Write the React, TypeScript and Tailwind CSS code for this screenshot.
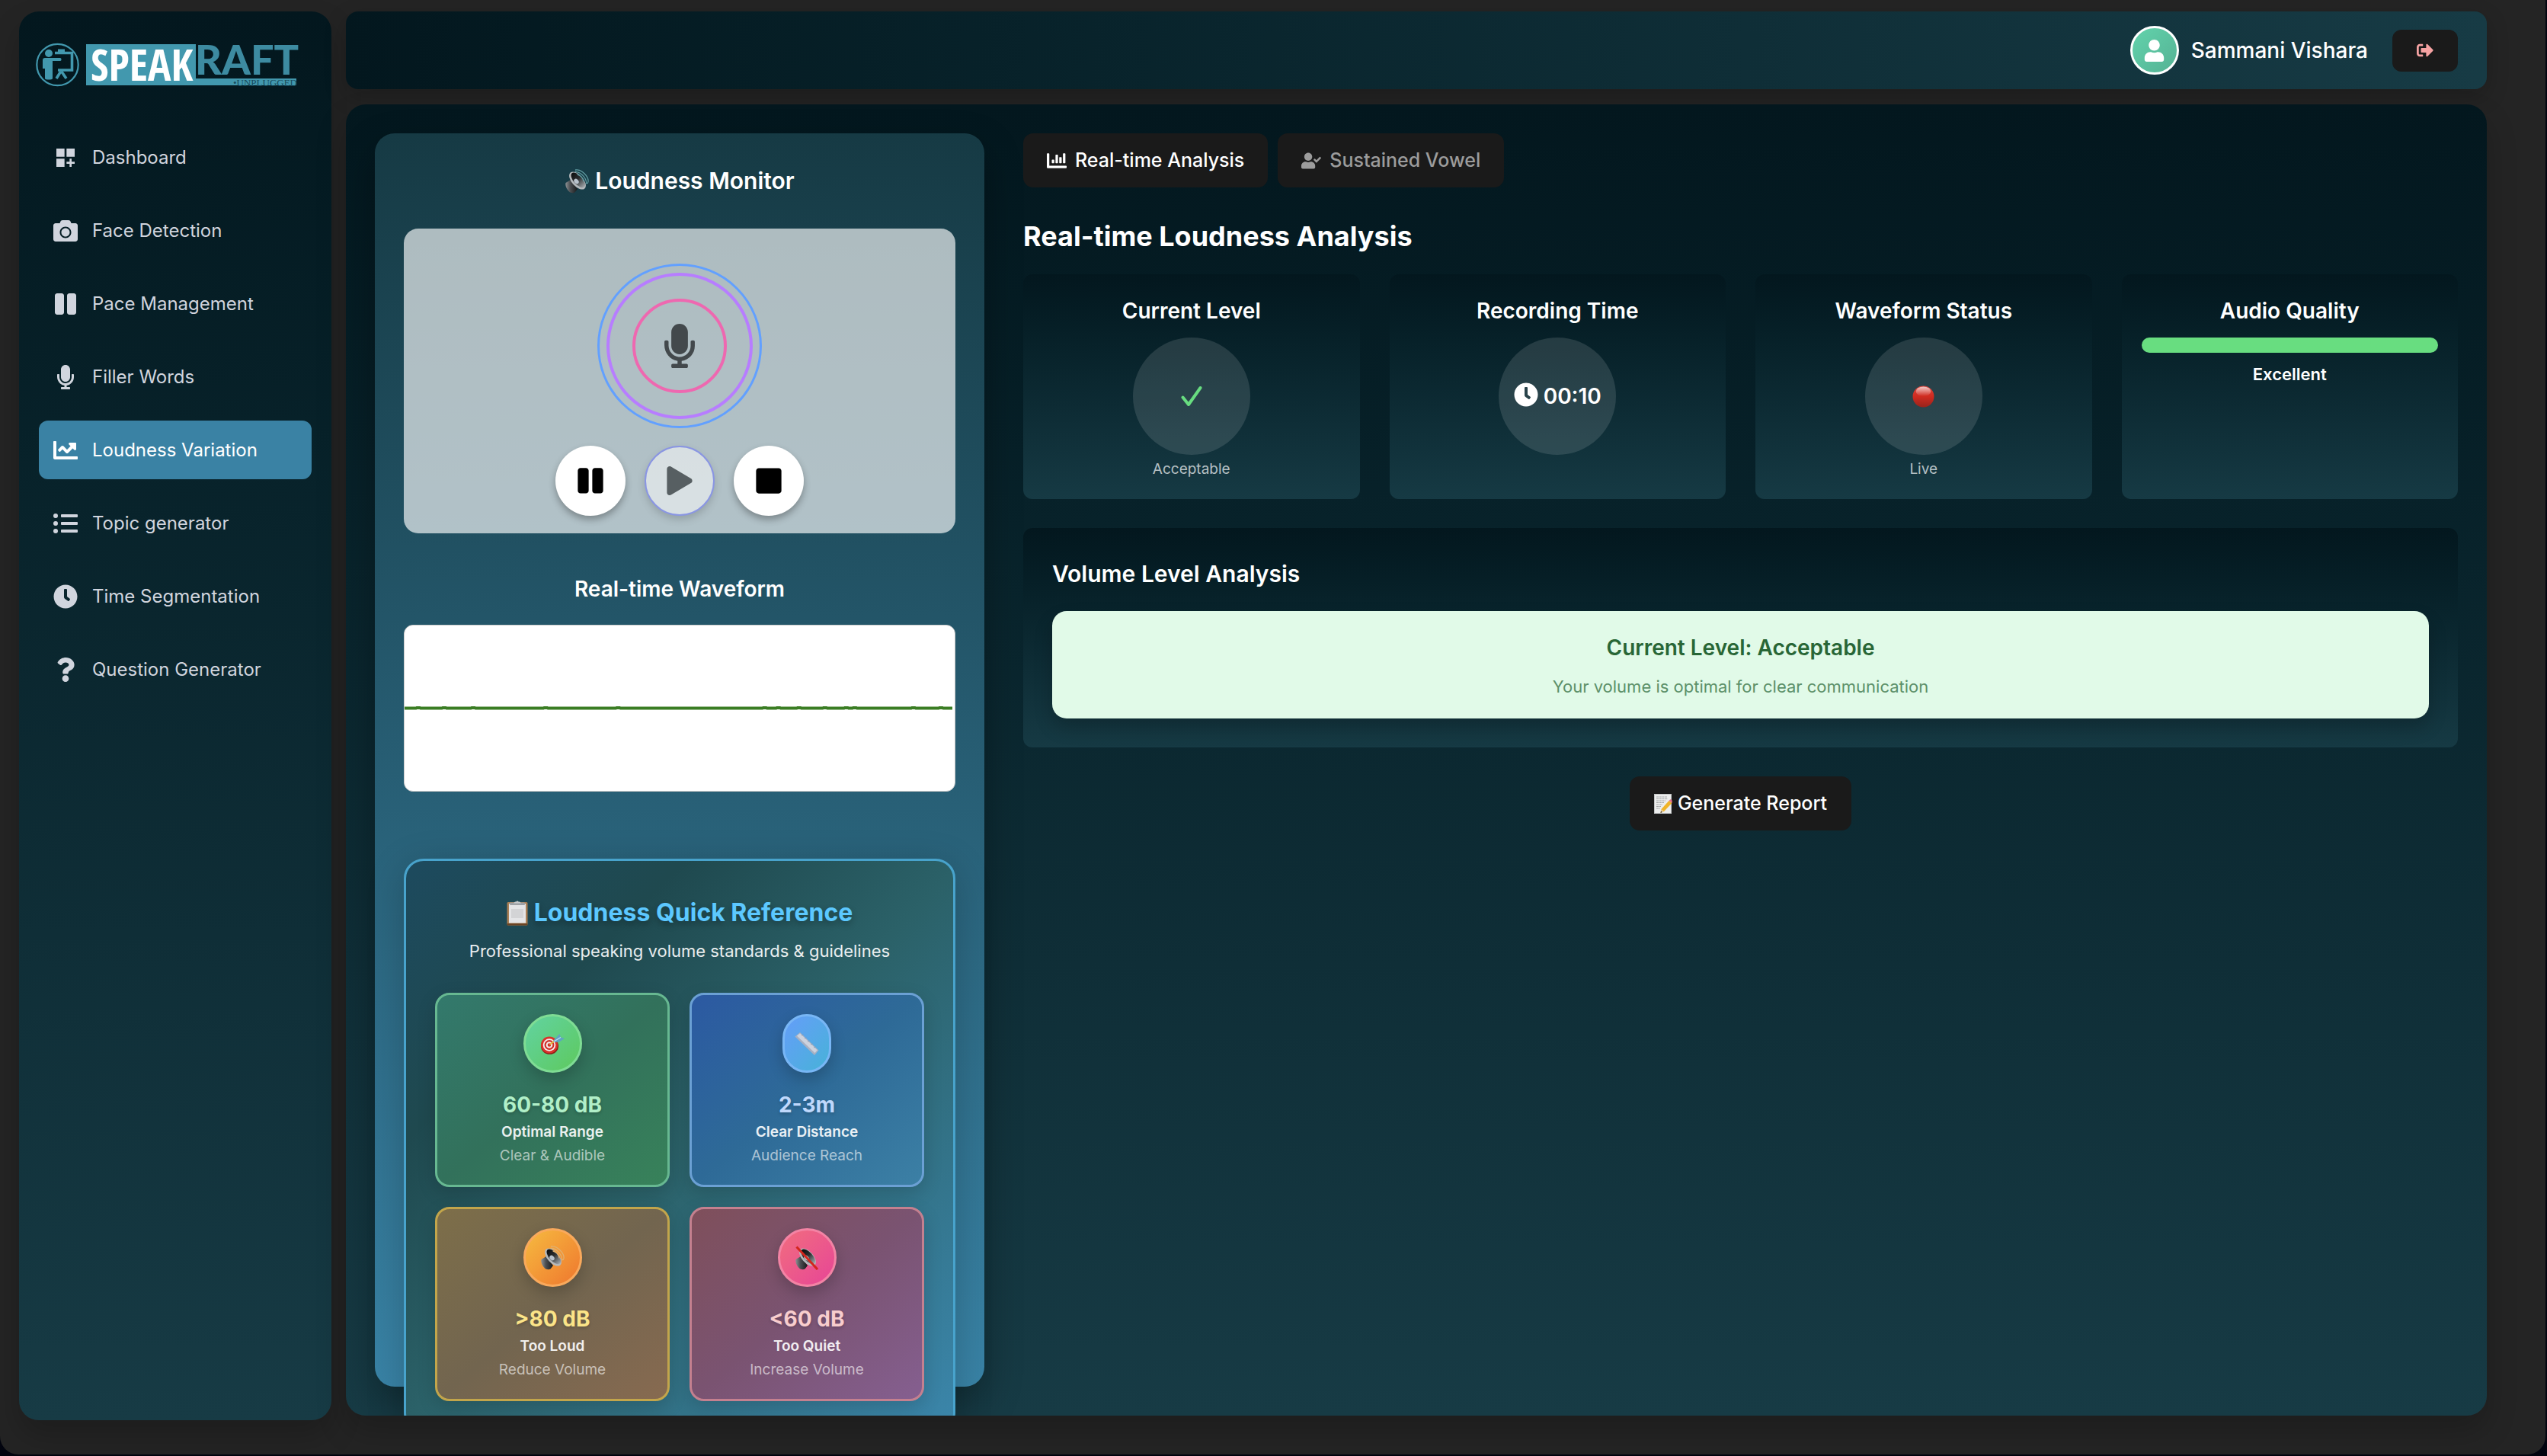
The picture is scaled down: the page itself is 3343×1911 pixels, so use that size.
import React from 'react';
import { MdDashboardCustomize } from 'react-icons/md';
import {
  FaCamera,
  FaChartBar,
  FaChartLine,
  FaClock,
  FaListUl,
  FaMicrophone,
  FaPause,
  FaPlay,
  FaQuestion,
  FaSignOutAlt,
  FaStop,
  FaUser,
  FaUserCheck,
} from 'react-icons/fa';

function SpeakerArt({ className, muted = false, wave = '#5f9aa0' }: { className: string; muted?: boolean; wave?: string }) {
  const id = React.useId();
  return (
    <svg viewBox="0 0 32 32" className={className} aria-hidden="true">
      <defs>
        <linearGradient id={`${id}-box`} x1="0" y1="0" x2="1" y2="0">
          <stop offset="0" stopColor="#8d9194" />
          <stop offset="0.400" stopColor="#4a4d50" />
          <stop offset="1" stopColor="#17191a" />
        </linearGradient>
        <linearGradient id={`${id}-cone`} x1="0" y1="0" x2="0" y2="1">
          <stop offset="0" stopColor="#0c0d0e" />
          <stop offset="0.450" stopColor="#2a2d2f" />
          <stop offset="1" stopColor="#a4a9ad" />
        </linearGradient>
      </defs>
      <path d="M1.500 18 8 14l9 12-3.500 4.500c-2 1.200-6 .8-7.500-1C3 26.500.5 21.500 1.500 18Z" fill={`url(#${id}-box)`} />
      <ellipse cx="17" cy="15" rx="7.500" ry="14" transform="rotate(-42 17 15)" fill="#b4b8bb" />
      <ellipse cx="17.800" cy="14.300" rx="5.800" ry="12.200" transform="rotate(-42 17.800 14.300)" fill={`url(#${id}-cone)`} />
      <ellipse cx="15.500" cy="16" rx="2.800" ry="3.600" transform="rotate(-42 15.500 16)" fill="#b9c2cc" />
      {muted ? (
        <path d="M3.500 2.500 29 30" stroke="#d3261d" strokeWidth="3" strokeLinecap="square" />
      ) : (
        <g fill="none" stroke={wave} strokeWidth="1.300" strokeLinecap="round">
          <path d="M14 3.500C21 3 29 12 28.500 18.500" />
          <path d="M14.500 1C22-.5 32 10 31 16.500c-.3 1.800-1.300 2.500-2.500 2" />
          <path d="M17 7c4 1 7.500 5 8 9" />
        </g>
      )}
    </svg>
  );
}

function ClipboardArt({ className }: { className: string }) {
  return (
    <svg viewBox="0 0 28 34" className={className} aria-hidden="true">
      <rect x="0.500" y="3" width="27" height="30.500" rx="1.500" fill="#a97f55" />
      <rect x="0.500" y="31" width="27" height="2.500" rx="1" fill="#6b4424" />
      <rect x="3" y="5" width="22" height="25.500" fill="#e4e5e7" />
      <rect x="6" y="12" width="16" height="12" fill="#d3d4d6" />
      <rect x="4" y="3.500" width="20" height="3.500" rx="1.200" fill="#9ea2a6" />
      <path d="M9 4.500 11 2.500h1.500a1.600 1.600 0 0 1 3 0H17l2 2Z" fill="#c8cbce" />
    </svg>
  );
}

function TargetArt({ className }: { className: string }) {
  return (
    <svg viewBox="0 0 32 28" className={className} aria-hidden="true">
      <ellipse cx="12.500" cy="17" rx="11.500" ry="10.800" fill="#8f1a17" />
      <circle cx="12" cy="15.500" r="11" fill="#d9322b" />
      <circle cx="12" cy="15.500" r="8.300" fill="#f7eeee" />
      <circle cx="12" cy="15.500" r="6.500" fill="#cf2f29" />
      <circle cx="12" cy="15.500" r="4.300" fill="#f7eeee" />
      <circle cx="12" cy="15.500" r="2.300" fill="#cf2f29" />
      <path d="m12.500 15 8-6" stroke="#e3bd3f" strokeWidth="1.800" />
      <path d="m17.500 9.500 8-8.500 1.500 4.500L32 7l-7 4.500-7 .5Z" fill="#5fa3c4" />
      <path d="m18 11 9-5.500" stroke="#bfe3f2" strokeWidth="1.200" />
    </svg>
  );
}

function RulerArt({ className }: { className: string }) {
  return (
    <svg viewBox="0 0 32 32" className={className} aria-hidden="true">
      <path d="M0.500 6.500 7 1l24.500 23.500L26 31Z" fill="#a7b0c2" />
      <path d="M3 5.500 7 2.300l22.700 22L26.500 28Z" fill="#ccd2de" />
      <path d="m9 5 2.500-1M13 9l2.500-1M17 13l2.500-1M21 17l2.500-1M25 21l2.500-1" stroke="#8d96a8" strokeWidth="0.800" />
    </svg>
  );
}

function RedDotArt({ className }: { className: string }) {
  return (
    <svg viewBox="0 0 28 28" className={className} aria-hidden="true">
      <defs>
        <linearGradient id="dot-body" x1="0" y1="0" x2="0" y2="1">
          <stop offset="0" stopColor="#d9453c" />
          <stop offset="0.500" stopColor="#cf2b20" />
          <stop offset="1" stopColor="#97231c" />
        </linearGradient>
        <linearGradient id="dot-shine" x1="0" y1="0" x2="0" y2="1">
          <stop offset="0" stopColor="#fff" stopOpacity="0.700" />
          <stop offset="1" stopColor="#fff" stopOpacity="0" />
        </linearGradient>
      </defs>
      <circle cx="14" cy="14" r="13.500" fill="url(#dot-body)" />
      <ellipse cx="14" cy="7.500" rx="9.500" ry="6" fill="url(#dot-shine)" />
    </svg>
  );
}

function MemoArt({ className }: { className: string }) {
  return (
    <svg viewBox="0 0 24 26" className={className} aria-hidden="true">
      <rect x="0.500" y="0.500" width="22" height="25" fill="#eceded" stroke="#c2c4c5" />
      <path
        d="M3 4h14M3 6.500h15M3 9h12M3 11.500h10M3 14h8M3 16.500h6M3 19h5"
        stroke="#9b9d9f"
        strokeWidth="0.900"
        strokeDasharray="3 0.700"
      />
      <path d="M19.500 9 23.500 12 13 23l-4.500 2 1-5Z" fill="#f0b429" />
      <path d="m19.500 9 1.500-1.500c1-.8 3.200 1 2.800 2.300L23.500 12Z" fill="#e8748a" />
      <path d="m9.500 20 3.500 3-4.500 2Z" fill="#e9cfa0" />
      <path d="m8.500 25 .6-2.400 1.600 1.400Z" fill="#333" />
    </svg>
  );
}

function Logo() {
  return (
    <svg viewBox="0 0 344 60" className="h-[60px] w-[344px] overflow-visible" role="img" aria-label="Speakraft Unplugged">
      <g fill="none" stroke="#4298ae">
        <circle cx="28.500" cy="30" r="27.200" strokeWidth="2.200" />
        <path d="M25 14.500h22.500v22.500H29" strokeWidth="3.600" />
        <path d="M33 38.500 27 48M33.500 38.500 40 48" strokeWidth="3.600" />
        <path d="M29 11.500h9" strokeWidth="4" />
      </g>
      <g fill="#4298ae">
        <circle cx="17" cy="15" r="5" />
        <path d="M12 21h20c2 0 2 4 0 4H22v23c0 2-10 2-10 0V35H9V24c0-2 1-3 3-3Z" />
        <rect x="66" y="3" width="144" height="54" />
        <rect x="209" y="48" width="133" height="9" />
      </g>
      <text x="72" y="51" fill="#ffffff" fontSize="57" fontWeight="700" fontFamily='"Open Sans Condensed", "Open Sans", sans-serif'>
        SPEAK
      </text>
      <text x="209" y="43" fill="#3d8ba1" fontSize="54" fontWeight="900" fontFamily="Lato, sans-serif">
        RAFT
      </text>
      <text x="259" y="58" fill="#164a5b" fontSize="13" fontFamily='"Liberation Serif", serif'>
        •UNPLUGGED
      </text>
    </svg>
  );
}

const NAV = [
  { label: 'Dashboard', Icon: MdDashboardCustomize },
  { label: 'Face Detection', Icon: FaCamera },
  { label: 'Pace Management', Icon: FaPause },
  { label: 'Filler Words', Icon: FaMicrophone },
  { label: 'Loudness Variation', Icon: FaChartLine, active: true },
  { label: 'Topic generator', Icon: FaListUl },
  { label: 'Time Segmentation', Icon: FaClock },
  { label: 'Question Generator', Icon: FaQuestion },
];

function Sidebar() {
  return (
    <aside className="mb-[45px] w-[410px] shrink-0 rounded-[26px] bg-linear-to-b from-[#03171e] to-[#173b45] px-[26px] pt-10 shadow-[0_20px_40px_rgba(0,0,0,0.2)]">
      <div className="-mx-1 mb-[53px]">
        <Logo />
      </div>
      <nav className="flex flex-col gap-[19px]">
        {NAV.map(({ label, Icon, active }) => (
          <a
            key={label}
            href="#"
            aria-current={active ? 'page' : undefined}
            className={
              active
                ? 'flex h-[77px] items-center gap-[19px] rounded-xl bg-[#3a82a4] px-[19px] text-[24px] text-white'
                : 'flex h-[77px] items-center gap-[19px] rounded-xl px-[19px] text-[24px] text-[#d1d5de]'
            }
          >
            <Icon className="size-8 shrink-0" />
            {label}
          </a>
        ))}
      </nav>
    </aside>
  );
}

function Header() {
  return (
    <header className="flex h-[102px] shrink-0 items-center justify-end rounded-[16px] bg-linear-to-r from-[#03171e] to-[#173b45] pr-[38px] shadow-[0_10px_30px_rgba(0,0,0,0.2)]">
      <div className="mr-4 flex size-16 items-center justify-center rounded-full border-[3px] border-white bg-linear-to-br from-[#62d3ac] to-[#55b294] text-white">
        <FaUser className="size-[29px]" />
      </div>
      <span className="mr-8 text-[28px] font-medium text-white">Sammani Vishara</span>
      <button
        type="button"
        aria-label="Sign out"
        className="flex h-[55px] w-[86px] items-center justify-center rounded-xl bg-[#1a1a1a] text-[#f6a3a3]"
      >
        <FaSignOutAlt className="size-[22px]" />
      </button>
    </header>
  );
}

const WAVE_BUMPS = [18, 52, 90, 185, 280, 472, 490, 517, 551, 579, 590, 667, 703];

function Waveform() {
  return (
    <div className="flex h-[219px] items-center overflow-hidden rounded-xl border border-[#cccccc] bg-white">
      <svg viewBox="0 0 721 10" preserveAspectRatio="none" className="h-[10px] w-full" role="img" aria-label="Waveform">
        <path
          d={'M0 4.500' + WAVE_BUMPS.map((x) => `H${x - 3}l1 -0.500h4l1 0.500`).join('') + 'H718'}
          fill="none"
          stroke="#3a7d23"
          strokeWidth="4"
        />
      </svg>
    </div>
  );
}

const TILES = [
  {
    value: '60-80 dB',
    label: 'Optimal Range',
    note: 'Clear & Audible',
    art: <TargetArt className="h-7 w-8" />,
    box: 'border-[#67b891] from-[#33796c] via-[#32715b] to-[#38825a]',
    badge: 'w-[77px] border-[#7fdc94] from-[#62d3a0] to-[#5ec95c]',
    color: 'text-[#b0efc8]',
  },
  {
    value: '2-3m',
    label: 'Clear Distance',
    note: 'Audience Reach',
    art: <RulerArt className="size-8" />,
    box: 'border-[#6ba0d4] from-[#2c59a2] via-[#2e6a97] to-[#3c80a5]',
    badge: 'w-16 border-[#78b6f5] from-[#649df9] to-[#46b2d8]',
    color: 'text-[#bfd8fc]',
  },
  {
    value: '>80 dB',
    label: 'Too Loud',
    note: 'Reduce Volume',
    art: <SpeakerArt className="size-8" wave="#e0b070" />,
    box: 'border-[#c2a54b] from-[#7d6e49] via-[#72654f] to-[#876a50]',
    badge: 'w-[77px] border-[#f9a95c] from-[#f5ba40] to-[#ee762e]',
    color: 'text-[#fbe488]',
  },
  {
    value: '<60 dB',
    label: 'Too Quiet',
    note: 'Increase Volume',
    art: <SpeakerArt className="size-8" muted />,
    box: 'border-[#c4808f] from-[#7f4f5b] via-[#7a5371] to-[#855f90]',
    badge: 'w-[77px] border-[#f383a4] from-[#f16c7e] to-[#e74496]',
    color: 'text-[#f8cdcd]',
  },
];

function QuickReference() {
  return (
    <section className="mt-[88px] rounded-[26px] border-[3px] border-[#48a3cc] bg-[linear-gradient(135deg,#1d4a5e_0%,#1f494f_25%,#2b6168_50%,#3b86ab_100%)] p-[38px] text-center shadow-[0_10px_50px_rgba(0,0,0,0.2)]">
      <h3 className="flex items-center justify-center gap-2 text-[32px] leading-[60px] font-bold text-[#5cc8ff] [text-shadow:0_4px_8px_rgba(0,0,0,0.3)]">
        <ClipboardArt className="h-[34px] w-7" />
        Loudness Quick Reference
      </h3>
      <p className="mt-1 text-[22px] leading-8 text-white/90">Professional speaking volume standards &amp; guidelines</p>
      <div className="mt-[39px] grid grid-cols-2 gap-[26px]">
        {TILES.map((t) => (
          <div
            key={t.value}
            className={`flex flex-col items-center rounded-[19px] border-[3px] bg-linear-to-br py-[25px] shadow-[0_8px_24px_rgba(0,0,0,0.15)] ${t.box}`}
          >
            <div
              className={`flex h-[77px] items-center justify-center rounded-full border-[3px] bg-linear-to-br shadow-[0_8px_20px_rgba(0,0,0,0.2)] ${t.badge}`}
            >
              {t.art}
            </div>
            <div className={`mt-[22px] text-[28px] leading-10 font-bold [text-shadow:0_2px_4px_rgba(0,0,0,0.2)] ${t.color}`}>{t.value}</div>
            <div className="mt-[3px] text-[19px] leading-[26px] font-semibold text-white/90">{t.label}</div>
            <div className="mt-[5px] text-[19px] leading-[26px] text-white/60">{t.note}</div>
          </div>
        ))}
      </div>
    </section>
  );
}

function Monitor() {
  return (
    <section className="min-h-0 rounded-[26px] bg-linear-to-b from-[#163a44] to-[#3983a6] p-[38px] shadow-[0_20px_50px_rgba(0,0,0,0.3)]">
      <h2 className="mb-[38px] flex items-center justify-center gap-2 text-[30px] leading-[49px] font-semibold text-white">
        <SpeakerArt className="size-8" />
        Loudness Monitor
      </h2>
      <div className="flex flex-col items-center rounded-[19px] bg-white/65 pt-[46px] pb-[23px]">
        <div className="grid size-[216px] place-items-center rounded-full border-[3px] border-[#62a0ff]">
          <div className="grid size-[192px] place-items-center rounded-full border-4 border-[#b77dff]">
            <div className="grid size-[124px] place-items-center rounded-full border-4 border-[#ee68b0]">
              <FaMicrophone className="size-[58px] text-[#43494c]" />
            </div>
          </div>
        </div>
        <div className="mt-[23px] flex gap-[25px]">
          <button
            type="button"
            aria-label="Pause"
            className="grid size-[92px] place-items-center rounded-full bg-white text-black shadow-[0_5px_10px_rgba(0,0,0,0.3)]"
          >
            <FaPause className="size-[38px]" />
          </button>
          <button
            type="button"
            aria-label="Play"
            className="grid size-[92px] place-items-center rounded-full border-2 border-[#646cff] bg-white text-black opacity-50 shadow-[0_5px_10px_rgba(0,0,0,0.3)]"
          >
            <FaPlay className="size-[38px]" />
          </button>
          <button
            type="button"
            aria-label="Stop"
            className="grid size-[92px] place-items-center rounded-full bg-white text-black shadow-[0_5px_10px_rgba(0,0,0,0.3)]"
          >
            <FaStop className="size-[38px]" />
          </button>
        </div>
      </div>
      <h3 className="mt-[51px] mb-[25px] text-center text-[28px] leading-[44px] font-semibold text-white">Real-time Waveform</h3>
      <Waveform />
      <QuickReference />
    </section>
  );
}

function StatCard({ title, children }: { title: string; children: React.ReactNode }) {
  return (
    <div className="flex min-h-[295px] flex-col items-center rounded-xl bg-linear-to-b from-[#03171e] to-[#163a44] p-[26px]">
      <h3 className="mb-[13px] text-[28px] leading-[44px] font-semibold text-white">{title}</h3>
      {children}
    </div>
  );
}

function Analysis() {
  return (
    <section className="flex flex-col">
      <div className="flex gap-[13px]">
        <button type="button" className="flex h-[71px] items-center gap-[11px] rounded-[13px] bg-[#1a1a1a] px-[31px] text-[25px] font-medium text-white">
          <FaChartBar className="size-[26px]" />
          Real-time Analysis
        </button>
        <button type="button" className="flex h-[71px] items-center gap-[11px] rounded-[13px] bg-[#1a1a1a] px-[31px] text-[25px] font-medium text-[#9c9c9c]">
          <FaUserCheck className="size-[26px]" />
          Sustained Vowel
        </button>
      </div>
      <h1 className="mt-[41px] text-[36px] leading-[46px] font-bold text-white">Real-time Loudness Analysis</h1>
      <div className="mt-[27px] grid grid-cols-4 gap-[39px]">
        <StatCard title="Current Level">
          <div className="grid size-[154px] place-items-center rounded-full bg-white/12">
            <svg viewBox="0 0 28 28" className="size-7" aria-hidden="true">
              <path d="M2.500 15.500 10 25 25.500 3" fill="none" stroke="#68dd80" strokeWidth="4" strokeLinecap="round" strokeLinejoin="round" />
            </svg>
          </div>
          <p className="mt-1.5 text-[19px] leading-[26px] text-white/70">Acceptable</p>
        </StatCard>
        <StatCard title="Recording Time">
          <div className="flex size-[154px] items-center justify-center gap-[7px] rounded-full bg-white/12 text-[28px] font-semibold text-white">
            <FaClock className="mb-1 size-8" />
            00:10
          </div>
        </StatCard>
        <StatCard title="Waveform Status">
          <div className="grid size-[154px] place-items-center rounded-full bg-white/12">
            <RedDotArt className="size-[29px]" />
          </div>
          <p className="mt-1.5 text-[19px] leading-[26px] text-white/70">Live</p>
        </StatCard>
        <StatCard title="Audio Quality">
          <div className="h-5 w-full rounded-[10px] bg-[#68dd80]" />
          <p className="mt-3 text-[22px] leading-8 font-semibold text-white">Excellent</p>
        </StatCard>
      </div>
      <div className="mt-[38px] rounded-xl bg-linear-to-b from-[#03171e] to-[#163a44] p-[38px]">
        <h2 className="mb-[26px] text-[30px] leading-[45px] font-semibold text-white">Volume Level Analysis</h2>
        <div className="rounded-[19px] bg-[#e1fae8] p-[26px] text-center shadow-[0_12px_24px_rgba(0,0,0,0.2)]">
          <p className="text-[28px] leading-[44px] font-semibold text-[#286636]">Current Level: Acceptable</p>
          <p className="mt-[13px] text-[22px] leading-8 text-[#5c9069]">Your volume is optimal for clear communication</p>
        </div>
      </div>
      <button
        type="button"
        className="mt-[38px] flex h-[71px] items-center gap-[7px] self-center rounded-[13px] bg-[#1a1a1a] px-8 text-[25px] font-medium text-white"
      >
        <MemoArt className="h-[26px] w-6" />
        Generate Report
      </button>
    </section>
  );
}

export default function App() {
  return (
    <div className="h-screen overflow-hidden bg-[#02040f] pr-[2px] pb-[2px] font-['Inter',sans-serif]">
      <div className="flex h-full gap-[19px] rounded-b-[24px] bg-[#242424] pt-[15px] pr-[77px] pl-[25px]">
        <Sidebar />
        <div className="mb-[51px] flex min-w-0 flex-1 flex-col gap-5">
          <Header />
          <main className="grid min-h-0 flex-1 grid-cols-[800fr_1883fr] grid-rows-[minmax(0,1fr)] gap-[51px] overflow-hidden rounded-[26px] bg-linear-to-b from-[#03171e] to-[#173b45] p-[38px] shadow-[0_20px_40px_rgba(0,0,0,0.2)]">
            <Monitor />
            <Analysis />
          </main>
        </div>
      </div>
    </div>
  );
}
